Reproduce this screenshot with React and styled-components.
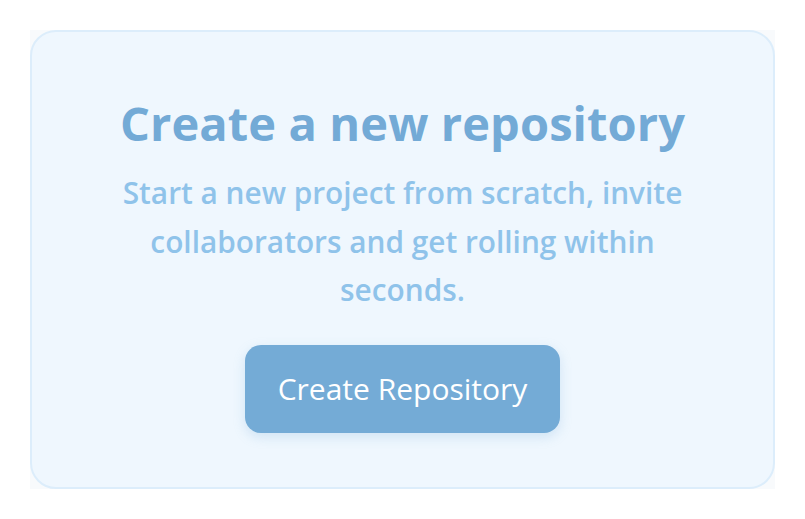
import React from "react";
import styled, { createGlobalStyle } from "styled-components";

const Global = createGlobalStyle`
  html, body { margin: 0; padding: 0; background: #ffffff; }
  body { font-family: "Open Sans", "Noto Sans", sans-serif; }
  * { box-sizing: border-box; }
`;

const Page = styled.div`
  min-height: 100vh;
  padding: 30px;
  display: flex;
  flex-direction: column;
`;

const Frame = styled.div`
  flex: 1;
  display: flex;
  background: #f8fafc;
`;

const Card = styled.section`
  flex: 1;
  display: flex;
  flex-direction: column;
  align-items: center;
  text-align: center;
  padding: 62px 48px 54px;
  background: #eff7fe;
  border: 2px solid #dcedfb;
  border-radius: 26px;
`;

const Title = styled.h1`
  margin: 0;
  font-size: 47px;
  line-height: 58px;
  font-weight: 700;
  color: #73aad6;
  letter-spacing: 0.1px;
`;

const Subtitle = styled.p`
  margin: 17px 0 0;
  max-width: 600px;
  font-size: 29.8px;
  line-height: 48.5px;
  font-weight: 600;
  color: #8fc3ea;
`;

const Button = styled.button`
  margin-top: 30px;
  height: 88px;
  padding: 0 33px;
  border: none;
  border-radius: 16px;
  background: #74abd6;
  color: #ffffff;
  font-family: "Open Sans", "Noto Sans", sans-serif;
  font-size: 30px;
  font-weight: 400;
  box-shadow: 0 4px 12px rgba(116, 171, 214, 0.25);
  cursor: pointer;
`;

export default function App() {
  return (
    <>
      <Global />
      <Page>
        <Frame>
          <Card>
            <Title>Create a new repository</Title>
            <Subtitle>
              Start a new project from scratch, invite collaborators and get rolling within seconds.
            </Subtitle>
            <Button>Create Repository</Button>
          </Card>
        </Frame>
      </Page>
    </>
  );
}
